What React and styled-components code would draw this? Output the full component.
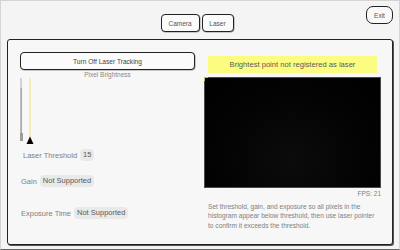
import React from "react";
import styled, { createGlobalStyle } from "styled-components";

const Global = createGlobalStyle`
  html, body { margin: 0; padding: 0; }
  body { font-family: "Liberation Sans", Arial, sans-serif; background: #f4f4f4; }
`;

const Screen = styled.div`
  width: 400px;
  height: 250px;
  box-sizing: border-box;
  border: 1px solid #d4d4d4;
  border-bottom: 1px solid #666;
  background: #f4f4f4;
  display: flex;
  flex-direction: column;
  overflow: hidden;
`;

const Header = styled.header`
  display: grid;
  grid-template-columns: 1fr auto 1fr;
  height: 38px;
  padding: 0 6px 0 0;
`;

const Tabs = styled.nav`
  grid-column: 2;
  display: flex;
  gap: 2px;
  margin-top: 13px;
  align-self: start;
`;

const TabButton = styled.button`
  height: 18px;
  width: ${p => p.$w}px;
  padding: 0;
  border: 1px solid #222;
  border-radius: 4px;
  background: #fafafa;
  font-family: inherit;
  font-size: 6.5px;
  color: #555;
  cursor: pointer;
  box-shadow: 0.5px 0.5px 0 #999;
`;

const ExitButton = styled.button`
  grid-column: 3;
  justify-self: end;
  align-self: start;
  margin-top: 5px;
  width: 27px;
  height: 18px;
  border: 1px solid #222;
  border-radius: 7px;
  background: #fafafa;
  font-family: inherit;
  font-size: 6.5px;
  color: #555;
  padding: 0;
`;

const Panel = styled.main`
  margin: 0 6px 0 6px;
  height: 206px;
  box-sizing: border-box;
  border: 1px solid #222;
  border-radius: 3px;
  background: #f7f7f7;
  box-shadow: 1px 1px 0 #555;
  display: grid;
  grid-template-columns: 175px 177px;
  column-gap: 9px;
  padding: 12px 0 0 12px;
`;

const LeftCol = styled.section`
  display: flex;
  flex-direction: column;
`;

const WideButton = styled.button`
  height: 18px;
  border: 1px solid #222;
  border-radius: 4px;
  background: #fbfbfb;
  font-family: inherit;
  font-size: 6.6px;
  color: #444;
  padding: 0;
  box-shadow: 0.5px 0.5px 0 #999;
`;

const Caption = styled.div`
  text-align: center;
  font-size: 6.5px;
  color: #888;
  margin-top: 2px;
  line-height: 6px;
`;

const Histogram = styled.svg`
  display: block;
  width: 174px;
  height: 66px;
  margin-top: 0;
`;

const Row = styled.div`
  display: flex;
  align-items: center;
  gap: 3px;
  margin-left: ${p => p.$indent}px;
  margin-top: ${p => p.$top}px;
  font-size: 7.5px;
  color: #808080;
`;

const Chip = styled.span`
  background: #e9e9e9;
  border-radius: 4px;
  padding: 2px 3px;
  color: #5a5a5a;
  font-size: 7.5px;
  line-height: 8px;
`;

const RightCol = styled.section`
  display: flex;
  flex-direction: column;
`;

const Banner = styled.div`
  margin: 4px 4px 0 4px;
  height: 17px;
  background: #fcfc80;
  border-radius: 1px;
  display: flex;
  align-items: center;
  justify-content: center;
  font-size: 7.6px;
  color: #5a5a5a;
`;

const Video = styled.div`
  position: relative;
  margin-top: 4px;
  height: 111px;
  box-sizing: border-box;
  border: 1px solid #4a4a4a;
  background: radial-gradient(ellipse at 50% 75%, #0b0b0b 0%, #030303 60%, #000 100%);
`;

const Marker = styled.span`
  position: absolute;
  left: -1px;
  top: -1px;
  width: 3px;
  height: 3px;
  border-top: 1px solid #cdbd3a;
  border-left: 1px solid #cdbd3a;
`;

const Fps = styled.div`
  text-align: right;
  font-size: 6.5px;
  color: #808080;
  margin-top: 2px;
  line-height: 8px;
`;

const Help = styled.p`
  margin: 4px 0 0 4px;
  font-size: 6.6px;
  line-height: 9.3px;
  color: #808080;
`;

export default function App() {
  return (
    <Screen>
      <Global />
      <Header>
        <Tabs>
          <TabButton $w={39}>Camera</TabButton>
          <TabButton $w={32}>Laser</TabButton>
        </Tabs>
        <ExitButton>Exit</ExitButton>
      </Header>
      <Panel>
        <LeftCol>
          <WideButton>Turn Off Laser Tracking</WideButton>
          <Caption>Pixel Brightness</Caption>
          <Histogram viewBox="0 0 174 66">
            <rect x="0" y="0" width="2" height="63" fill="#d2d2d2" />
            <rect x="0.5" y="10" width="1.5" height="53" fill="#a9a9a9" />
            <rect x="0" y="55" width="3" height="8" fill="#9c9c9c" />
            <rect x="9.5" y="0" width="1" height="62" fill="#f3e27a" />
            <polygon points="6.5,66 10,58.5 13.5,66" fill="#000" />
          </Histogram>
          <Row $indent={3} $top={5}>
            Laser Threshold <Chip>15</Chip>
          </Row>
          <Row $indent={1} $top={14}>
            Gain <Chip>Not Supported</Chip>
          </Row>
          <Row $indent={1} $top={20}>
            Exposure Time <Chip>Not Supported</Chip>
          </Row>
        </LeftCol>
        <RightCol>
          <Banner>Brightest point not registered as laser</Banner>
          <Video>
            <Marker />
          </Video>
          <Fps>FPS: 21</Fps>
          <Help>
            Set threshold, gain, and exposure so all pixels in the histogram
            appear below threshold, then use laser pointer to confirm it
            exceeds the threshold.
          </Help>
        </RightCol>
      </Panel>
    </Screen>
  );
}
